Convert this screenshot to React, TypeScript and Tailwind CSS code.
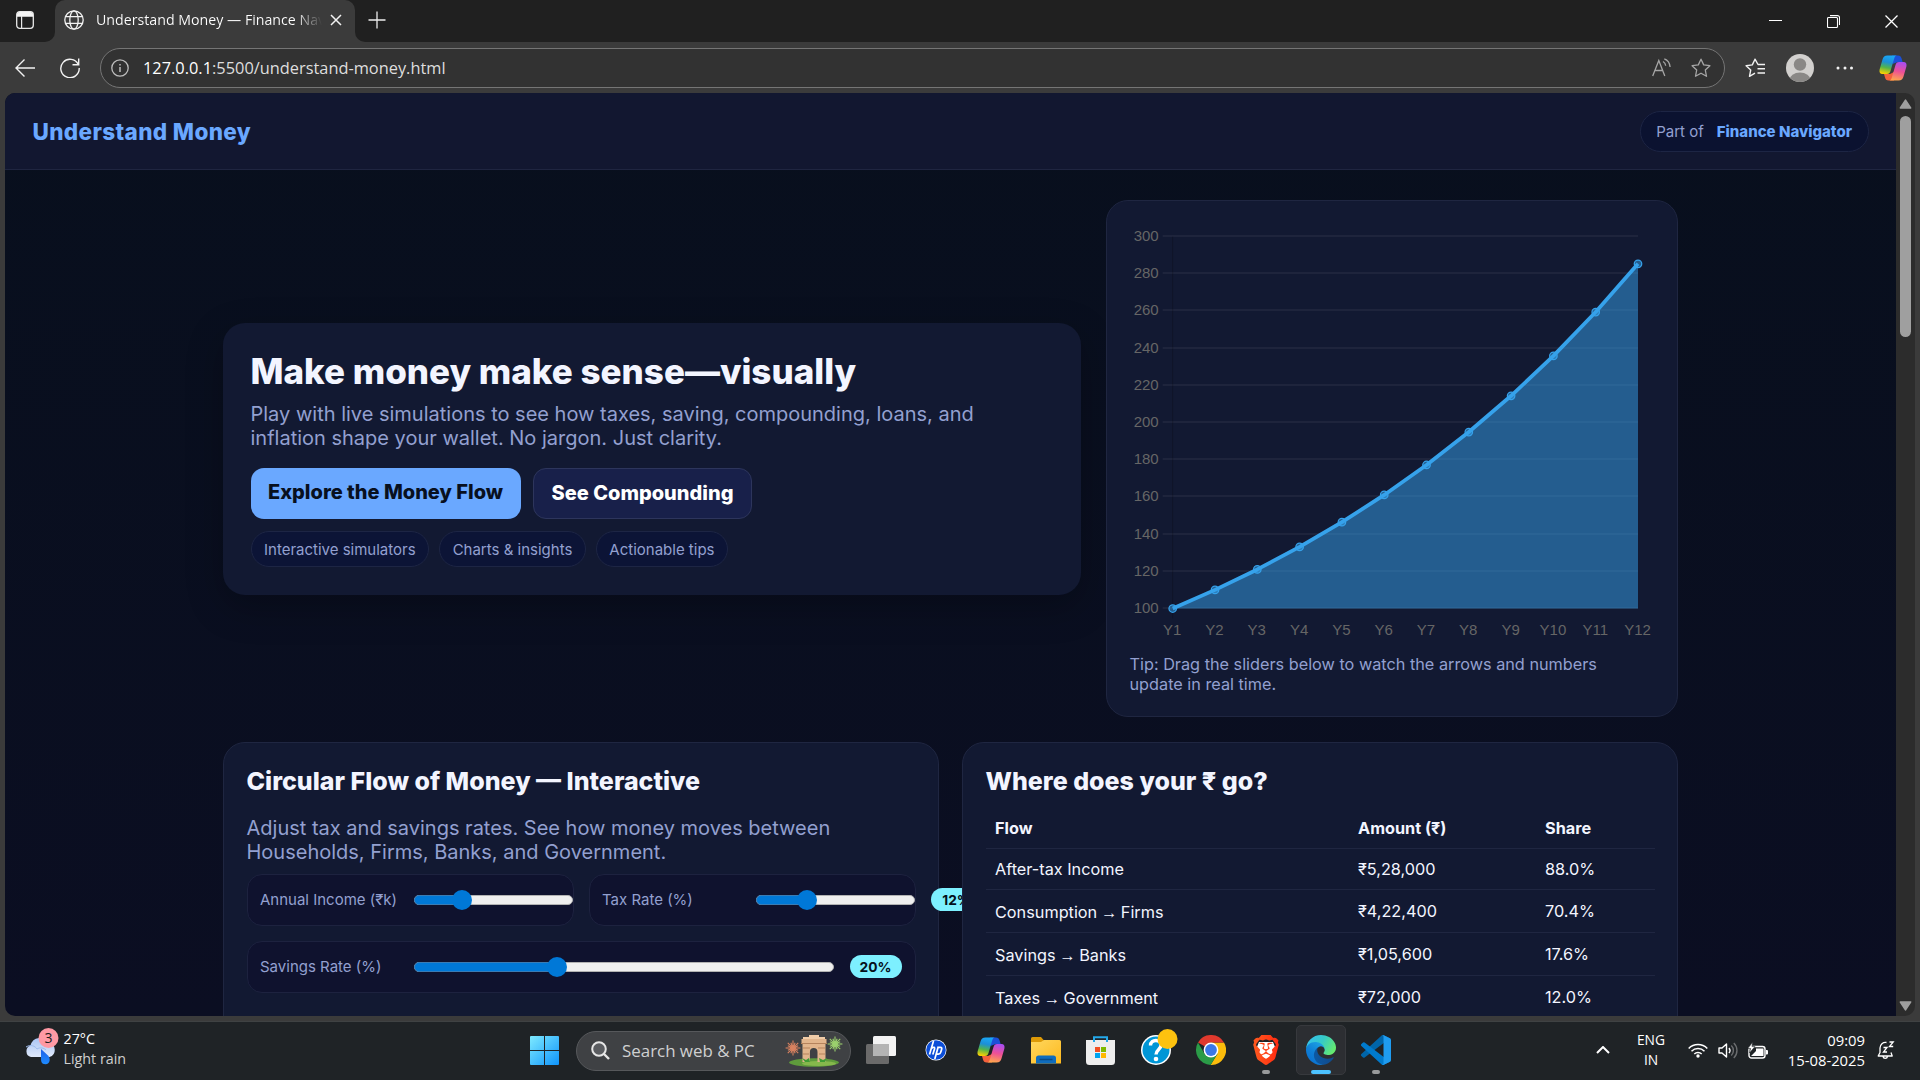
import React from 'react';
import { SiBrave } from 'react-icons/si';

const UI = "font-['Open_Sans','Noto_Sans',sans-serif]";

/* ---------- Browser chrome ---------- */

function Globe() {
  return (
    <svg width="20" height="20" viewBox="0 0 20 20" fill="none" stroke="#f2f2f2" strokeWidth="1.3">
      <circle cx="10" cy="10" r="9.2" />
      <ellipse cx="10" cy="10" rx="4.2" ry="9.2" />
      <path d="M1.6 6.6h16.8M1.6 13.4h16.8" />
    </svg>
  );
}

function TitleBar() {
  return (
    <div className="flex h-[42px] shrink-0 bg-[#3b3b3b]">
      <div className="flex h-[42px] w-[55px] items-center rounded-br-[10px] bg-[#202020] pl-4 pb-[2px]">
        <svg width="18" height="18" viewBox="0 0 18 18">
          <rect x="0.7" y="0.7" width="16.6" height="16.6" rx="3" fill="none" stroke="#e8e8e8" strokeWidth="1.3" />
          <path d="M1 5.8V3.5A2.5 2.5 0 0 1 3.5 1h11A2.5 2.5 0 0 1 17 3.5v2.3z" fill="#f4f4f4" />
          <path d="M5.6 5v12" stroke="#e8e8e8" strokeWidth="1.2" />
        </svg>
      </div>
      <div className="w-[300px] bg-[#202020]">
        <div className="flex h-[42px] items-center rounded-t-[10px] bg-[#3b3b3b] pb-[2px] pl-[9px]">
          <Globe />
          <div className={`${UI} ml-[12px] w-[226px] overflow-hidden whitespace-nowrap bg-gradient-to-r from-white from-[88%] to-transparent bg-clip-text text-[14.2px] leading-5 text-transparent`}>
            Understand Money — Finance Navigator
          </div>
          <svg className="ml-[8px]" width="12" height="12" viewBox="0 0 12 12" stroke="#f2f2f2" strokeWidth="1.5">
            <path d="M1 1l10 10M11 1L1 11" />
          </svg>
        </div>
      </div>
      <div className="flex h-[42px] flex-1 items-center justify-between rounded-bl-[10px] bg-[#202020]">
        <svg className="mb-[3px] ml-[13px]" width="18" height="18" viewBox="0 0 18 18" stroke="#ededed" strokeWidth="1.3">
          <path d="M9 0.5v17M0.5 9h17" />
        </svg>
        <div className="flex items-center gap-[45px] pr-[22px]">
          <svg width="13" height="13" viewBox="0 0 13 13"><path d="M0 5.5h13" stroke="#fff" /></svg>
          <svg width="13" height="13" viewBox="0 0 13 13" fill="none" stroke="#fff" strokeWidth="1.1">
            <rect x="0.5" y="2.5" width="10" height="10" rx="1" />
            <path d="M3 0.6h7.5a2 2 0 0 1 2 2V10" />
          </svg>
          <svg width="13" height="13" viewBox="0 0 13 13" stroke="#fff" strokeWidth="1.3"><path d="M0.5 0.5l12 12M12.5 0.5l-12 12" /></svg>
        </div>
      </div>
    </div>
  );
}

function Copilot({ id }: { id: string }) {
  return (
    <svg width="28" height="26" viewBox="0 0 28 26">
      <defs>
        <linearGradient id={`${id}a`} x1="0.5" y1="0" x2="0.3" y2="1">
          <stop offset="0" stopColor="#1aa7f5" /><stop offset="0.35" stopColor="#1c8fd8" /><stop offset="0.65" stopColor="#52b44b" /><stop offset="1" stopColor="#ffd000" />
        </linearGradient>
        <linearGradient id={`${id}b`} x1="0.6" y1="0" x2="0.4" y2="1">
          <stop offset="0" stopColor="#a94df0" /><stop offset="0.5" stopColor="#ee5096" /><stop offset="1" stopColor="#ffa64d" />
        </linearGradient>
      </defs>
      <path d="M13 0.5h6c2 0 3 1 3.6 3l1 3.5h-5l-5 2z" fill="#1b50d8" />
      <path d="M15 25.5H9.5c-2 0-3-1.2-3.500-3L5 19h6l4-2z" fill="#f4613c" />
      <path d="M8.5 0.5H18c-1.500 0-2.300 1.200-2.800 3l-3.700 12.500c-.6 2-1.500 3-3.500 3H3.500C1 19 0 17.200.6 14.500L3.500 4.500C4.300 2 5.500.5 8.500.5z" fill={`url(#${id}a)`} />
      <path d="M19.5 25.5H10c1.500 0 2.300-1.200 2.800-3L16.500 10c.6-2 1.500-3 3.500-3h4.500c2.500 0 3.500 1.800 2.900 4.500l-2.900 10c-.8 2.500-2 4-5 4z" fill={`url(#${id}b)`} />
    </svg>
  );
}

const STAR = 'M10 1.2l2.7 5.7 6.2.8-4.6 4.3 1.2 6.3L10 15.2l-5.5 3.1 1.2-6.3L1.1 7.7l6.2-.8z';

function Toolbar() {
  return (
    <div className="flex h-[51px] shrink-0 items-center bg-[#3b3b3b] pl-[15px]">
      <svg width="20" height="18" viewBox="0 0 20 18" fill="none" stroke="#f2f2f2" strokeWidth="1.4">
        <path d="M20 9H1M9.5 0.5L1 9l8.5 8.5" />
      </svg>
      <svg className="ml-[25px]" width="20" height="20" viewBox="0 0 20 20" fill="none" stroke="#f2f2f2" strokeWidth="1.4">
        <path d="M18.3 6.5A9.2 9.2 0 1 0 19.2 10M18.7 0.5v6.3h-6.2" />
      </svg>
      <div className="ml-[20px] flex h-10 w-[1625px] items-center rounded-full border border-[#757575] bg-[#323232] pl-[10px] pr-[13px]">
        <svg width="18" height="18" viewBox="0 0 18 18" fill="none" stroke="#bdbdbd" strokeWidth="1.3">
          <circle cx="9" cy="9" r="8.2" /><path d="M9 8v5M9 5v1.5" strokeWidth="1.5" />
        </svg>
        <div className={`${UI} ml-[14px] flex-1 whitespace-nowrap pt-px text-[16.38px] text-[#dedede]`}>
          <span className="text-white">127.0.0.1</span>:5500/understand-money.html
        </div>
        <svg width="20" height="19" viewBox="0 0 20 19" fill="none" stroke="#a6a6a6" strokeWidth="1.3">
          <path d="M0.7 18L6.8 2.5 12.8 18M2.8 12.5h8M11 3.5c1.8 1 2.5 2.3 2.7 4.3M12.3.8c3.5 1.3 5.5 4.2 5.8 8.2" />
        </svg>
        <svg className="ml-[19px]" width="20" height="20" viewBox="0 0 20 20" fill="none" stroke="#a6a6a6" strokeWidth="1.3" strokeLinejoin="round"><path d={STAR} /></svg>
      </div>
      <svg className="ml-[20px]" width="21" height="20" viewBox="0 0 21 20" fill="none" stroke="#f2f2f2" strokeWidth="1.4" strokeLinejoin="round">
        <path d="M20 6.5h-7L10 1.2 7.3 6.9 1.1 7.7l4.6 4.3-1.2 6.3L10 15.2M12.5 10.8H20M12.5 15H20" />
      </svg>
      <svg className="ml-[20px]" width="28" height="28" viewBox="0 0 28 28">
        <clipPath id="avatar"><circle cx="14" cy="14" r="14" /></clipPath>
        <g clipPath="url(#avatar)">
          <rect width="28" height="28" fill="#d2d0ce" />
          <circle cx="14" cy="10.5" r="6.2" fill="#8a8886" />
          <ellipse cx="14" cy="26" rx="10.5" ry="7.5" fill="#8a8886" />
        </g>
      </svg>
      <svg className="ml-[22px]" width="18" height="4" viewBox="0 0 18 4" fill="#f2f2f2">
        <circle cx="2" cy="2" r="1.5" /><circle cx="9" cy="2" r="1.5" /><circle cx="15.5" cy="2" r="1.5" />
      </svg>
      <div className="ml-[25px]"><Copilot id="cpt" /></div>
    </div>
  );
}

/* ---------- Growth chart ---------- */

const X0 = 42.7;
const STEP = 42.3;
const TOP = 12.5;
const BOTTOM = 384.5;
const points = Array.from({ length: 12 }, (_, i) => {
  const value = 100 * Math.pow(1.1, i);
  return { x: X0 + i * STEP, y: BOTTOM - ((value - 100) / 200) * (BOTTOM - TOP) };
});
const line = points.map((p, i) => `${i ? 'L' : 'M'}${p.x} ${p.y}`).join(' ');

function GrowthChart() {
  const right = X0 + 11 * STEP;
  return (
    <svg width="525" height="430" viewBox="0 0 525 430" className="block overflow-visible">
      {Array.from({ length: 11 }, (_, i) => {
        const y = Math.floor(TOP + i * 37.2);
        return (
          <g key={i}>
            <path d={`M${X0 - 10} ${y}H${right}`} stroke="#ffffff" strokeOpacity="0.1" />
            <text x={X0 - 14} y={y + 4.8} textAnchor="end" fill="#666666" fontSize="15" className="font-['Liberation_Sans',sans-serif]">{300 - i * 20}</text>
          </g>
        );
      })}
      <path d={`M${X0} ${TOP}V${BOTTOM + 10}`} stroke="#000" strokeOpacity="0.2" />
      <path d={`${line} L${right} ${BOTTOM} L${X0} ${BOTTOM}Z`} fill="#36a2eb" fillOpacity="0.5" />
      <path d={line} fill="none" stroke="#36a2eb" strokeWidth="3.75" strokeLinejoin="round" />
      {points.map((p, i) => (
        <g key={i}>
          <circle cx={p.x} cy={p.y} r="3.75" fill="#36a2eb" fillOpacity="0.5" stroke="#36a2eb" strokeWidth="1.25" />
          <text x={p.x - 0.5} y="411" textAnchor="middle" fill="#666666" fontSize="15" className="font-['Liberation_Sans',sans-serif]">{`Y${i + 1}`}</text>
        </g>
      ))}
    </svg>
  );
}

/* ---------- Page ---------- */

function Chip({ children }: { children: React.ReactNode }) {
  return (
    <span className="flex h-[36px] items-center rounded-full border border-[#1d2544] bg-[#0c1436] px-[12.5px] pt-[2px] text-[15px] text-[#93a0d0]">{children}</span>
  );
}

function Slider({ label, percent, width, badge }: { label: string; percent: number; width: number; badge?: string }) {
  return (
    <div className="flex h-[52px] items-center rounded-[15px] border border-[#1d223f] bg-[#0f122e] pl-[12.5px]">
      <span className="w-[153.5px] shrink-0 whitespace-nowrap pt-[2px] text-[15px] text-[#93a0d0]">{label}</span>
      <div className="relative h-[10px] shrink-0 rounded-full border border-[#b2b2b2] bg-[#efefef]" style={{ width }}>
        <div className="-mt-px -ml-px h-[10px] rounded-l-full border border-[#3a7cb5] bg-[#0078d7]" style={{ width: percent }} />
        <div className="absolute -top-[6px] size-5 rounded-full bg-[#0078d7]" style={{ left: percent - 11 }} />
      </div>
      {badge && (
        <span className="ml-[16px] flex h-[23px] w-[52px] shrink-0 items-center justify-center rounded-full bg-[#7df0ff] pt-px text-[13.75px] font-bold text-[#04101c]">{badge}</span>
      )}
    </div>
  );
}

const rows = [
  { from: 'After-tax Income', to: '', amount: '₹5,28,000', share: '88.0%', height: 'h-[41px]', pad: 'pt-px', flowPad: 'pt-px' },
  { from: 'Consumption', to: 'Firms', amount: '₹4,22,400', share: '70.4%', height: 'h-[43px]', pad: 'pt-px', flowPad: 'pt-[3px]' },
  { from: 'Savings', to: 'Banks', amount: '₹1,05,600', share: '17.6%', height: 'h-[43px]', pad: 'pt-px', flowPad: 'pt-[3px]' },
  { from: 'Taxes', to: 'Government', amount: '₹72,000', share: '12.0%', height: 'h-[43px]', pad: 'pt-px', flowPad: 'pt-[3px]' },
];

const CARD = 'rounded-[22px] border border-[#1f2641] bg-[#121932]';

function Page() {
  return (
    <div className="flex h-[923px] w-[1891px] flex-col overflow-hidden rounded-bl-[10px] rounded-tl-[10px] bg-gradient-to-b from-[#080f1d] to-[#0b0e22] font-[Inter,'Noto_Sans',sans-serif] text-[#f3f5ff]">
      <header className="flex h-[77px] shrink-0 items-center justify-between border-b border-[#1f2540] bg-[#121730] px-[27.5px]">
        <span className="pt-[2px] text-[22.5px] font-extrabold tracking-[0.36px] text-[#6aa8ff]">Understand Money</span>
        <span className="flex h-[41px] items-center gap-[13px] rounded-full border border-[#1d2544] bg-[#0b1230] px-[15.5px] pt-[2px] text-[15px] text-[#93a0d0]">
          Part of <b className="font-extrabold text-[#6aa8ff]">Finance Navigator</b>
        </span>
      </header>

      <main className="mx-auto flex w-[1455px] flex-col gap-[25px] pt-[30px]">
        <section className="flex items-center gap-[25px]">
          <div className="h-[272px] w-[858px] rounded-[22px] bg-[#121932] px-[27.5px] pt-[27.5px] shadow-[0_12px_36px_rgba(0,0,0,0.25)]">
            <h1 className="text-[35px] font-extrabold leading-[42px]">Make money make sense—visually</h1>
            <p className="mt-[10px] w-[760px] text-[20px] leading-[24px] text-[#93a0d0]">
              Play with live simulations to see how taxes, saving, compounding, loans, and inflation shape your wallet. No jargon. Just clarity.
            </p>
            <div className="mt-[18px] flex gap-[12.5px] text-[20px] font-extrabold">
              <span className="flex h-[51px] items-center rounded-[13px] bg-[#6aa8ff] px-[17.5px] pb-[3px] text-[#08101f]">Explore the Money Flow</span>
              <span className="flex h-[51px] items-center rounded-[13px] border border-[#2d355c] bg-[#18204a] px-[17.5px] pb-[2px] text-white">See Compounding</span>
            </div>
            <div className="mt-[12px] flex gap-[10px]">
              <Chip>Interactive simulators</Chip>
              <Chip>Charts &amp; insights</Chip>
              <Chip>Actionable tips</Chip>
            </div>
          </div>
          <div className={`${CARD} h-[517px] w-[572px] p-[22.5px]`}>
            <GrowthChart />
            <p className="w-[480px] text-[16.25px] leading-[20px] text-[#93a0d0]">Tip: Drag the sliders below to watch the arrows and numbers update in real time.</p>
          </div>
        </section>

        <section className="grid grid-cols-2 gap-[23px]">
          <div className={`${CARD} h-[400px] p-[22.5px]`}>
            <h2 className="text-[25px] font-extrabold leading-[30px]">Circular Flow of Money — Interactive</h2>
            <p className="mt-[20px] w-[640px] text-[20px] leading-[24px] text-[#93a0d0]">Adjust tax and savings rates. See how money moves between Households, Firms, Banks, and Government.</p>
            <div className="mt-[10px] grid grid-cols-2 gap-[15px]">
              <Slider label="Annual Income (₹k)" percent={48} width={159} />
              <Slider label="Tax Rate (%)" percent={51} width={159} badge="12%" />
              <div className="col-span-2">
                <Slider label="Savings Rate (%)" percent={143} width={420} badge="20%" />
              </div>
            </div>
          </div>
          <div className={`${CARD} relative h-[400px] p-[22.5px]`}>
            <h2 className="text-[25px] font-extrabold leading-[30px]">Where does your ₹ go?</h2>
            <div className="mt-[11px] text-[16.25px]">
              <div className="grid h-[42px] grid-cols-[372.5px_187px_1fr] items-center border-b border-[#1f2641] pt-[2px] font-bold">
                <span className="pl-[9.5px]">Flow</span><span>Amount (₹)</span><span>Share</span>
              </div>
              {rows.map((row) => (
                <div key={row.from} className={`grid grid-cols-[372.5px_187px_1fr] items-center border-b border-[#1f2641] ${row.height}`}>
                  <span className={`pl-[9.5px] ${row.flowPad}`}>
                    {row.from}
                    {row.to && <span className="mx-[3.7px] font-['Liberation_Sans'] text-[16.25px] leading-none">→</span>}
                    {row.to}
                  </span>
                  <span className={row.pad}>{row.amount}</span>
                  <span className={row.pad}>{row.share}</span>
                </div>
              ))}
            </div>
          </div>
        </section>
      </main>
    </div>
  );
}

function Scrollbar() {
  return (
    <div className="flex h-[923px] w-[19px] flex-col items-center rounded-r-[10px] bg-[#2c2c2c] pt-[6px]">
      <svg width="13" height="10" viewBox="0 0 13 10"><path d="M6.5 1.2L11.6 9H1.4z" fill="#9f9f9f" stroke="#9f9f9f" strokeWidth="1.6" strokeLinejoin="round" /></svg>
      <div className="mt-[7px] h-[221px] w-[11px] rounded-full bg-[#9f9f9f]" />
      <svg className="mb-[5px] mt-auto" width="13" height="10" viewBox="0 0 13 10"><path d="M6.5 8.8L11.6 1H1.4z" fill="#9f9f9f" stroke="#9f9f9f" strokeWidth="1.6" strokeLinejoin="round" /></svg>
    </div>
  );
}

/* ---------- Taskbar ---------- */

function Weather() {
  return (
    <svg width="36" height="40" viewBox="0 0 36 40">
      <defs>
        <linearGradient id="cloud" x1="0" y1="0" x2="0" y2="1"><stop offset="0" stopColor="#a9c4f3" /><stop offset="1" stopColor="#dfe9fb" /></linearGradient>
        <linearGradient id="drop" x1="0" y1="0" x2="0" y2="1"><stop offset="0" stopColor="#1f5fe8" /><stop offset="1" stopColor="#1d8bff" /></linearGradient>
      </defs>
      <path d="M6 31a6 6 0 0 1-.5-11.5A10 10 0 0 1 24 17a7.2 7.2 0 0 1 .5 14z" fill="url(#cloud)" />
      <path d="M1 21c5-3 9-1 11 2 3-2 7-1 9 1" fill="none" stroke="#9dbbee" />
      <path d="M16 23l7 6.5c3 3.2 2 8.7-2.5 8.7S16 35 16 32z" fill="url(#drop)" />
      <circle cx="23.5" cy="12" r="10" fill="#ff99a4" />
      <text x="23.5" y="17" textAnchor="middle" fontSize="14" fill="#1c1c1c" className={UI}>3</text>
    </svg>
  );
}

function Arch() {
  const burst = (cx: number, cy: number, color: string) => (
    <g stroke={color} strokeWidth="1.1">
      {Array.from({ length: 8 }, (_, i) => {
        const a = (i * Math.PI) / 8;
        const r = i % 2 ? 5.6 : 7.4;
        const dx = Math.cos(a) * r;
        const dy = Math.sin(a) * r;
        return <path key={i} d={`M${cx - dx} ${cy - dy}L${cx + dx} ${cy + dy}`} />;
      })}
      <circle cx={cx} cy={cy} r="2.4" fill={color} />
    </g>
  );
  return (
    <svg width="56" height="32" viewBox="0 0 56 32" className="overflow-visible">
      <ellipse cx="28" cy="27.5" rx="25" ry="4.2" fill="#5f9b3c" />
      <ellipse cx="33" cy="28.5" rx="17" ry="2.5" fill="#86b84c" />
      {burst(7, 13, '#d98260')}
      {burst(49, 9, '#9bd06d')}
      <path d="M15.5 4h25v5h-1v18h-8V17a3.8 4 0 0 0-7.6 0v10h-7.4V9h-1z" fill="#e2b58c" />
      <path d="M17 2h22v2H17zM23 0h10v2H23z" fill="#f0cca8" />
      <path d="M15 8.5h26M17 13h7M32 13h7M17 19h6M33 19h6" stroke="#b5835c" strokeWidth="1.2" />
      <path d="M16 23l3 4h5l-1-4-3 2zM33 23l1 4h5l2-4-4 2z" fill="#3f9d34" />
    </svg>
  );
}

function Cell({ children, dot, active }: { children: React.ReactNode; dot?: boolean; active?: boolean }) {
  return (
    <div className="flex h-[59px] w-[55px] items-center justify-center pb-px">
      <div className={`relative flex h-[50px] w-[50px] items-center justify-center rounded-[5px] ${active ? 'border border-[#37393d] bg-[#2c2e32]' : ''}`}>
        {children}
        {dot && <span className="absolute bottom-[1px] left-[21px] h-1 w-2 rounded-full bg-[#989a9b]" />}
        {active && <span className="absolute bottom-0 left-[14px] h-1 w-5 rounded-full bg-[#4cc2ff]" />}
      </div>
    </div>
  );
}

function Taskbar() {
  return (
    <div className={`${UI} flex h-[59px] shrink-0 border-t border-[#3f4243] bg-[#1f2326] text-[14.3px] leading-5 text-white`}>
      <div className="flex w-[517px] items-start pl-[25px] pt-[4px]">
        <Weather />
        <div className="ml-[2.5px] mt-[3px]">
          <div>27°C</div>
          <div className="text-[#cfcfcf]">Light rain</div>
        </div>
      </div>

      <div className="flex h-[57px] items-center">
        <Cell>
          <svg width="29" height="29" viewBox="0 0 29 29">
            <defs><linearGradient id="win" x1="0" y1="0" x2="1" y2="1"><stop offset="0" stopColor="#7eeaff" /><stop offset="1" stopColor="#0f94fb" /></linearGradient></defs>
            <path d="M1 0h13v14H0V1a1 1 0 0 1 1-1zM15 0h13a1 1 0 0 1 1 1v13H15zM0 15h14v14H1a1 1 0 0 1-1-1zM15 15h14v13a1 1 0 0 1-1 1H15z" fill="url(#win)" />
          </svg>
        </Cell>
        <div className="ml-[4px] mr-[2px] flex h-10 w-[275px] items-center rounded-full border border-[#56585b] bg-[#3f4144] pl-[14px] pr-[8px]">
          <svg width="19" height="19" viewBox="0 0 19 19" fill="none" stroke="#e6e6e6" strokeWidth="2"><circle cx="8" cy="8" r="6.8" fill="#5a5c60" /><path d="M13 13l5 5" strokeWidth="2.4" /></svg>
          <span className="ml-[12px] flex-1 whitespace-nowrap text-[16.9px] text-[#cfd0d1]">Search web &amp; PC</span>
          <Arch />
        </div>
        <Cell>
          <svg width="30" height="28" viewBox="0 0 30 28">
            <rect x="0" y="8" width="23" height="20" rx="1.5" fill="#6a6a6a" />
            <rect x="7" y="0" width="23" height="20" rx="1.5" fill="#f3f3f3" />
            <path d="M7 8h16v12H8.5A1.5 1.5 0 0 1 7 18.5z" fill="#b4b4b4" />
          </svg>
        </Cell>
        <Cell>
          <svg width="22" height="22" viewBox="0 0 22 22">
            <circle cx="11" cy="11" r="10.5" fill="#fff" /><circle cx="11" cy="11" r="9.8" fill="#0c4ed8" />
            <path d="M8.5 2L4.5 15.5M6.5 9.2c2-1.4 3.5-1 3 .8L7.8 15.5M13.3 7.5L9.8 20M13 8.3h2.3c1.5 0 1.7.8 1.3 2.2l-.8 2.6c-.4 1.5-1.2 2-2.5 2h-1.5" fill="none" stroke="#fff" strokeWidth="1.7" />
          </svg>
        </Cell>
        <Cell><Copilot id="cpb" /></Cell>
        <Cell>
          <svg width="30" height="27" viewBox="0 0 30 27">
            <defs><linearGradient id="fold" x1="0" y1="0" x2="1" y2="1"><stop offset="0" stopColor="#ffd75e" /><stop offset="1" stopColor="#fdb91e" /></linearGradient></defs>
            <path d="M0 1.5A1.5 1.5 0 0 1 1.5 0H10l3 3.5h15V8H0z" fill="#dd9a07" />
            <path d="M0 5h10l3-2h15.5A1.5 1.5 0 0 1 30 4.5V26.5H0z" fill="url(#fold)" />
            <path d="M5 26.5V21a2.5 2.5 0 0 1 2.5-2.5h15A2.5 2.5 0 0 1 25 21v5.5z" fill="#0f6cbd" />
            <path d="M8.5 22.5h13" stroke="#0a4a86" strokeWidth="1.5" />
          </svg>
        </Cell>
        <Cell>
          <svg width="29" height="29" viewBox="0 0 29 29">
            <path d="M0 4h29v21.5a3.5 3.5 0 0 1-3.5 3.5h-22A3.5 3.5 0 0 1 0 25.5z" fill="#eeeeee" />
            <path d="M8 6V1.2h13V6" fill="none" stroke="#24a9ea" strokeWidth="2" />
            <path d="M9 11h5v5H9z" fill="#f25022" /><path d="M15 11h5v5h-5z" fill="#7fba00" /><path d="M9 17h5v5H9z" fill="#00a4ef" /><path d="M15 17h5v5h-5z" fill="#ffb900" />
          </svg>
        </Cell>
        <Cell>
          <svg width="30" height="30" viewBox="0 0 30 30" className="overflow-visible">
            <circle cx="15" cy="15" r="15" fill="#fff" /><circle cx="15" cy="15" r="13.5" fill="#0096d6" />
            <path d="M9.5 10.5C9.5 3.5 20.5 4 20 10.5c-.3 4-5 4-5 9" fill="none" stroke="#fff" strokeWidth="3.4" />
            <circle cx="15" cy="24" r="2.3" fill="#fff" />
            <circle cx="26.5" cy="4" r="10" fill="#fdc20f" />
          </svg>
        </Cell>
        <Cell>
          <svg width="30" height="30" viewBox="0 0 30 30">
            <path d="M15 7.5H28A15 15 0 0 1 14.6 30l6.9-11.2z" fill="#fbbc0b" />
            <path d="M2 7.5A15 15 0 0 1 28 7.5H15L8.5 11.2z" fill="#e0392d" />
            <path d="M2 7.5A15 15 0 0 0 14.6 30l6.9-11.2-6.5 3.7-6.5-3.7z" fill="#2a9b47" />
            <circle cx="15" cy="15" r="7.4" fill="#fff" /><circle cx="15" cy="15" r="5.9" fill="#3b78e7" />
          </svg>
        </Cell>
        <Cell dot>
          <svg width="30" height="30" viewBox="0 0 30 30">
            <defs><linearGradient id="brave" x1="0" y1="0" x2="1" y2="0"><stop offset="0" stopColor="#ff5a1f" /><stop offset="1" stopColor="#ff2a10" /></linearGradient></defs>
            <path d="M8 7h14l2 5-3 10-6 5-6-5-3-10z" fill="#fff" />
            <SiBrave x="0" y="0" width="30" height="30" size={30} fill="url(#brave)" stroke="none" />
          </svg>
        </Cell>
        <Cell active>
          <svg width="30" height="30" viewBox="0 0 256 256">
            <defs>
              <linearGradient id="e1" x1="0" y1="0" x2="1" y2="0"><stop offset="0" stopColor="#0c59a4" /><stop offset="1" stopColor="#114a8b" /></linearGradient>
              <linearGradient id="e2" x1="0.8" y1="0.2" x2="0.3" y2="1"><stop offset="0" stopColor="#1b9de2" /><stop offset="0.5" stopColor="#0f7fd6" /><stop offset="1" stopColor="#0b6fcf" /></linearGradient>
              <linearGradient id="e3" x1="0" y1="0.2" x2="1" y2="0.6"><stop offset="0" stopColor="#35c1f1" /><stop offset="0.5" stopColor="#36c9c6" /><stop offset="1" stopColor="#66eb6e" /></linearGradient>
            </defs>
            <path d="M231.07 190.54c-3.6 1.93-7.22 3.61-11.03 5.05a101.86 101.86 0 0 1-35.93 6.47c-47.38 0-88.65-32.53-88.65-74.43.1-11.38 6.4-21.86 16.4-27.33-42.86 1.8-53.87 46.46-53.87 72.6 0 74.1 68.19 81.52 82.94 81.52 7.9 0 19.83-2.3 27.1-4.6l1.3-.4a128.37 128.37 0 0 0 66.65-52.78 4 4 0 0 0-4.9-6.1z" fill="url(#e1)" />
            <path d="M105.73 241.42a79.2 79.2 0 0 1-22.74-21.34 80.72 80.72 0 0 1 29.5-120.14c3.1-1.53 8.44-4.1 15.55-3.97a32.35 32.35 0 0 1 25.69 12.95 31.87 31.87 0 0 1 6.36 18.66c0-.21 24.46-79.61-80.05-79.61-43.9 0-80.05 41.65-80.05 78.21a130.4 130.4 0 0 0 12.1 56 128.33 128.33 0 0 0 156.4 67.09 75.55 75.55 0 0 1-62.76-7.85z" fill="url(#e2)" />
            <path d="M152.33 148.86c-.81 1.05-3.3 2.5-3.3 5.66 0 2.61 1.7 5.12 4.72 7.23 14.38 10 41.49 8.68 41.56 8.68 10.65 0 21.1-2.89 30.27-8.34A61.37 61.37 0 0 0 256 109.18c.26-22.47-8.02-37.4-11.33-43.98C223.4 23.78 177.7 0 128 0A128 128 0 0 0 .01 126.18c.48-36.55 36.8-66.06 80-66.06 3.5 0 23.46.34 42 10.07 16.34 8.58 24.9 18.94 30.85 29.21 6.18 10.67 7.28 24.15 7.28 29.52 0 5.37-2.74 13.33-7.8 19.94z" fill="url(#e3)" />
          </svg>
        </Cell>
        <Cell dot>
          <svg width="30" height="30" viewBox="0 0 100 100">
            <path d="M96.46 10.8L75.86.88a6.23 6.23 0 0 0-7.11 1.2L1.3 63.58a4.17 4.17 0 0 0 0 6.17l5.51 5a4.17 4.17 0 0 0 5.32.24L93.36 13.37A4.13 4.13 0 0 1 100 16.67v-.24a6.25 6.25 0 0 0-3.54-5.63z" fill="#0065a9" />
            <path d="M96.46 89.2l-20.6 9.92a6.23 6.23 0 0 1-7.11-1.2L1.3 36.42a4.17 4.17 0 0 1 0-6.17l5.51-5a4.17 4.17 0 0 1 5.32-.24l81.23 61.62a4.13 4.13 0 0 0 6.64-3.3v.24a6.25 6.25 0 0 1-3.54 5.63z" fill="#007acc" />
            <path d="M75.86 99.13a6.23 6.23 0 0 1-7.11-1.21c2.31 2.3 6.25.67 6.25-2.59V4.67c0-3.26-3.94-4.89-6.25-2.59a6.23 6.23 0 0 1 7.11-1.21l20.6 9.91A6.25 6.25 0 0 1 100 16.41v67.18a6.25 6.25 0 0 1-3.54 5.63z" fill="#1f9cf0" />
          </svg>
        </Cell>
      </div>

      <div className="ml-auto flex h-[56px] items-center pr-[25px]">
        <svg width="14" height="8" viewBox="0 0 14 8" fill="none" stroke="#fff" strokeWidth="2"><path d="M1 7l6-6 6 6" /></svg>
        <div className="ml-[26px] w-[30px] text-center text-[13.8px]"><div>ENG</div><div>IN</div></div>
        <svg className="ml-[22px]" width="20" height="15" viewBox="0 0 20 15" fill="none" stroke="#fff" strokeWidth="1.5">
          <path d="M0.7 5.5a13 13 0 0 1 18.6 0M3.5 8.3a9.2 9.2 0 0 1 13 0M6.3 11a5.3 5.3 0 0 1 7.4 0" /><circle cx="10" cy="13" r="1.7" fill="#fff" stroke="none" />
        </svg>
        <svg className="ml-[10px]" width="20" height="17" viewBox="0 0 20 17" fill="none" stroke="#fff" strokeWidth="1.4">
          <path d="M1 6v5h3l4.5 4V2L4 6zM11 6a4 4 0 0 1 0 5" strokeLinejoin="round" /><path d="M13.3 3.5a7 7 0 0 1 0 10M15.8 1a10.5 10.5 0 0 1 0 15" stroke="#6b6d6f" />
        </svg>
        <svg className="ml-[10px]" width="20" height="17" viewBox="0 0 20 17">
          <rect x="1" y="4.5" width="16" height="11.5" rx="2.5" fill="none" stroke="#fff" strokeWidth="1.4" />
          <path d="M18 8v4.5h1a1 1 0 0 0 1-1V9a1 1 0 0 0-1-1z" fill="#fff" />
          <path d="M8 6.5h7.500v7.500H3l5-5z" fill="#fff" />
          <path d="M4.5 0L0 6.5h2.5L1.5 11 7 4.5H4z" fill="#fff" stroke="#1f2326" strokeWidth="0.6" />
        </svg>
        <div className="ml-[18px] mr-[2px] w-[79px] text-right text-[14.8px]"><div>09:09</div><div>15-08-2025</div></div>
        <svg className="ml-[10px]" width="18" height="19" viewBox="0 0 18 19" fill="none" stroke="#fff" strokeWidth="1.3">
          <path d="M9.5 1.5A5.5 5.5 0 0 0 3 7v4.5L1.2 15h14L14 11.5M6 15.5c.5 2.5 4 2.5 4.5 0" strokeLinejoin="round" />
          <path d="M6.5 6.5H10l-3.5 4.5H10M12.5 1h3.7l-3.7 4.5h3.7" />
        </svg>
      </div>
    </div>
  );
}

export default function App() {
  return (
    <div className="flex h-[1080px] w-[1920px] flex-col overflow-hidden bg-[#3b3b3b]">
      <TitleBar />
      <Toolbar />
      <div className="flex h-[928px] shrink-0 pl-[5px]">
        <Page />
        <Scrollbar />
      </div>
      <Taskbar />
    </div>
  );
}
